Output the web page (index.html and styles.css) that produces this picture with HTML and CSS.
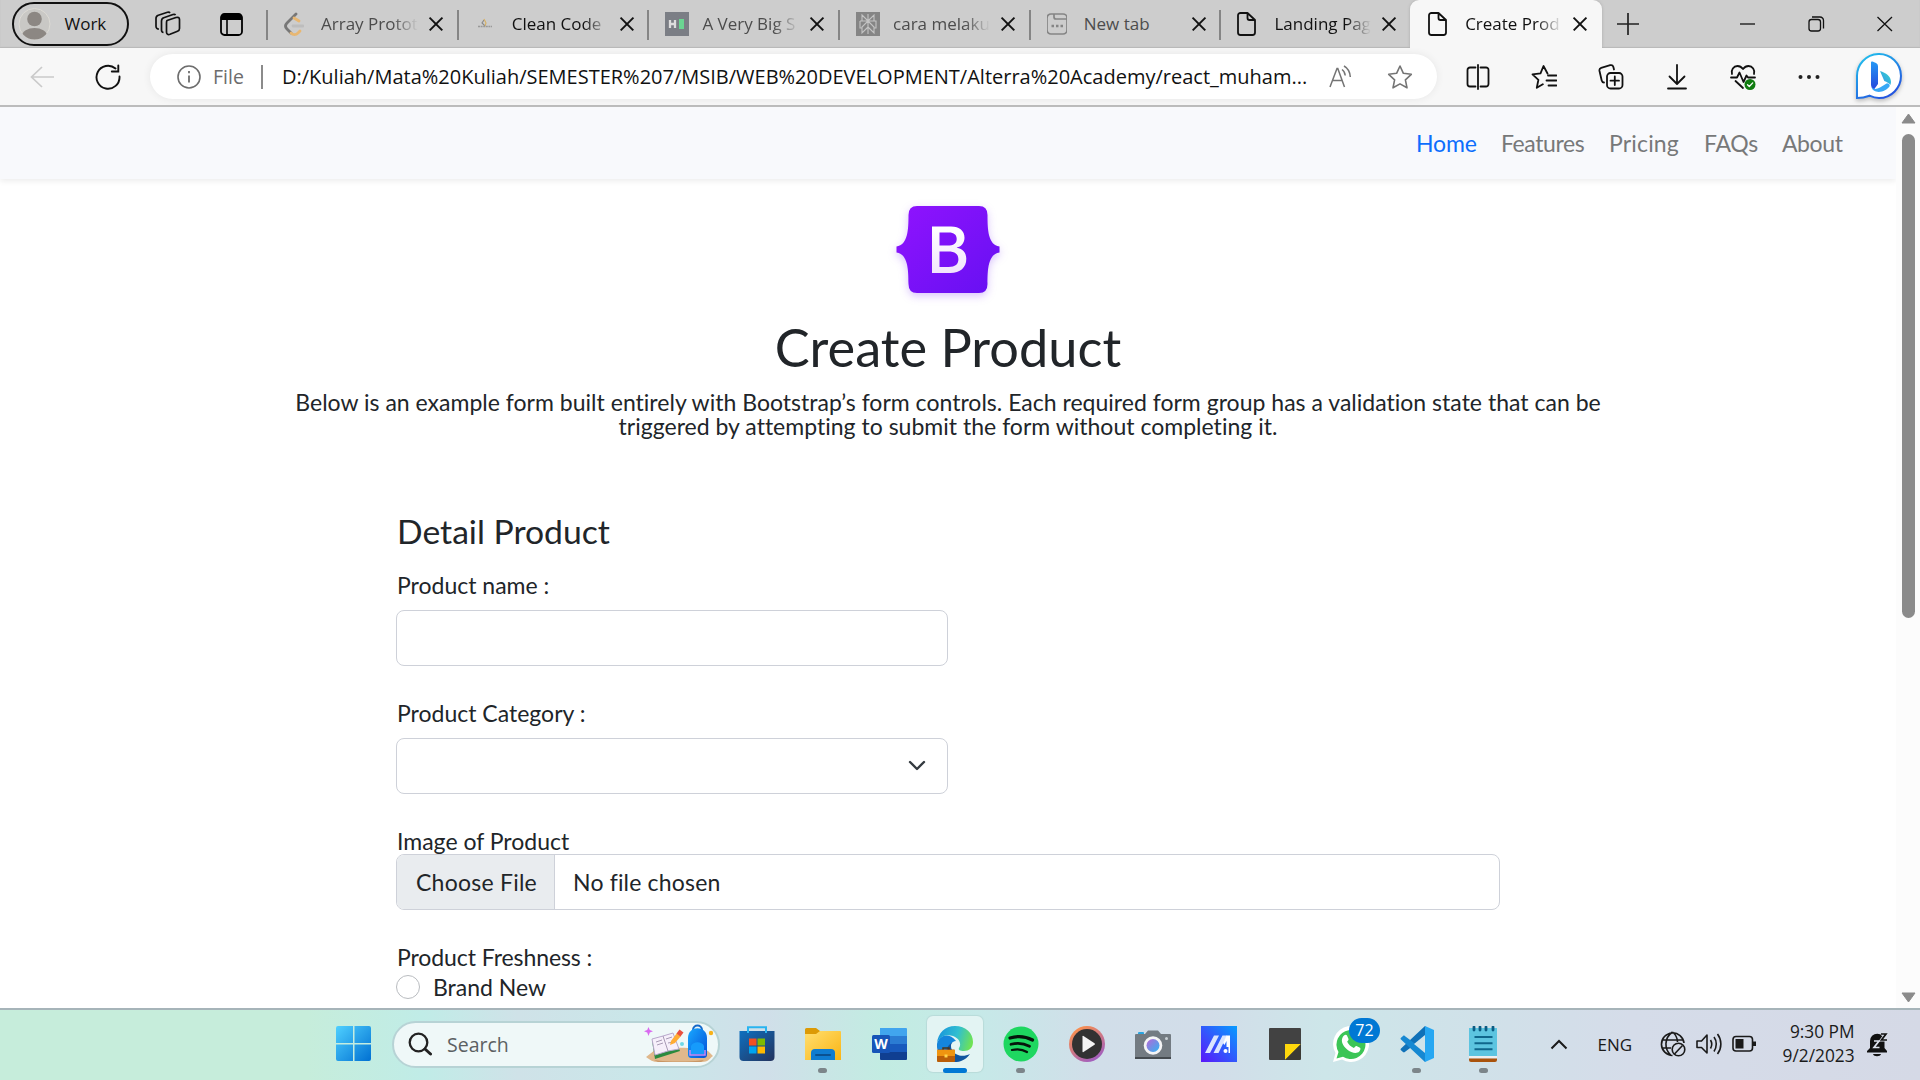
FILE: index.html
```html
<!DOCTYPE html>
<html lang="en">
<head>
<meta charset="utf-8">
<title>Create Product</title>
<link rel="stylesheet" href="styles.css">
</head>
<body>
<div class="screen">
  <header class="tabstrip">
    <div class="profile">
      <svg width="33" height="34" viewBox="0 0 33 34"><defs><clipPath id="av"><circle cx="16.500" cy="17" r="15.500"/></clipPath></defs><circle cx="16.500" cy="17" r="15.500" fill="#c9c8c5" stroke="#dddbd5"/><g fill="#8c8783" clip-path="url(#av)"><circle cx="16.500" cy="12" r="7.300"/><ellipse cx="16.500" cy="28.500" rx="12.500" ry="7.500"/></g></svg>
      <span>Work</span>
    </div>
    <svg class="workspaces" width="26" height="26" viewBox="0 0 26 26" fill="none" stroke="#111" stroke-width="1.700" stroke-linejoin="round"><path d="M12 9.500l9-3c2-.6 3.500.2 3.500 2v9c0 1.500-.8 2.300-2 2.800l-7.500 3c-2 .7-3.500-.2-3.500-2V12c0-1.300.2-2 .5-2.500z"/><path d="M8.500 21.500c-1.300-.2-2-1-2-2.500v-9c0-1.700.7-2.800 2.200-3.300l9.300-3.200c1-.3 2-.2 2.600.5"/><path d="M4 18c-1.800 0-3-1-3-2.700V7.500C1 5.800 1.800 4.800 3.300 4.300L12.500 1.300c1-.3 2-.1 2.600.6"/></svg>
    <svg class="tabactions" width="23" height="23" viewBox="0 0 23 23"><rect x="1" y="1" width="21" height="21" rx="3.500" fill="none" stroke="#000" stroke-width="1.800"/><path d="M1 7V4a3 3 0 0 1 3-3h15a3 3 0 0 1 3 3v3z"/><path d="M7 7v14" stroke="#000" stroke-width="1.600"/></svg>
    <div class="tabs">
      <div class="tab dim">
        <svg class="fav" viewBox="0 0 20 24"><g fill="none" stroke-width="2.800" stroke-linecap="round"><path d="M12 2L3 11c-2 2-2 4 0 6l4 4" stroke="#777"/><path d="M10 6l5 3M7 21c2 2 5 2 7 0l2-2" stroke="#e8b772"/><path d="M9 14h10" stroke="#bdbdbd"/></g></svg>
        <span class="name">Array Protot</span><i class="x"></i></div>
      <div class="tab">
        <svg class="fav" viewBox="0 0 20 24"><path d="M9 8l-2 3 3 3" fill="none" stroke="#888" stroke-width="1.100"/><path d="M9 7l2 4-1 3" stroke="#d8b060" stroke-width="1.100" fill="none"/><path d="M3 14.500h14" stroke="#999" stroke-width="1.300" stroke-dasharray="2 .6"/></svg>
        <span class="name">Clean Code</span><i class="x"></i></div>
      <div class="tab dim">
        <svg class="fav wide" viewBox="0 0 24 24"><path fill="#7b7e85" d="M0 0h24v24H0z"/><path d="M5 8v8M10 8v8M5 12h5" stroke="#ddd" stroke-width="2.300"/><path fill="#6bd592" d="M14 7h5v10h-5z"/></svg>
        <span class="name">A Very Big S</span><i class="x"></i></div>
      <div class="tab dim">
        <svg class="fav wide" viewBox="0 0 24 24"><path fill="#858585" d="M0 0h24v24H0z"/><path d="M12 2v20M6 3l6 6 6-6v6H6zM4 9h16v7h-2M4 9v7h2M12 9l-6 6v6l6-6M12 9l6 6v6l-6-6" fill="none" stroke="#c4c4c4" stroke-width="1.100"/></svg>
        <span class="name">cara melaku</span><i class="x"></i></div>
      <div class="tab dim">
        <svg class="fav" viewBox="0 0 20 24"><g fill="none" stroke="#858585" stroke-width="1.700"><rect x="0" y="2" width="20" height="20" rx="4"/><path d="M7 2v3c0 1.500 1 2 2 2h11"/></g><path d="M4.500 14h2.500M9 14h2.500M13.500 14h2.500" stroke="#858585" stroke-width="2.500"/></svg>
        <span class="name whole">New tab</span><i class="x"></i></div>
      <div class="tab">
        <svg class="fav" viewBox="0 0 20 24"><path d="M3.500 1H10.500L18 8V20.500a2.500 2.500 0 0 1-2.500 2.500H3.500A2.500 2.500 0 0 1 1 20.500V3.500A2.500 2.500 0 0 1 3.500 1zM10.500 1v5a2 2 0 0 0 2 2H18" fill="none" stroke="#111" stroke-width="1.800" stroke-linejoin="round"/></svg>
        <span class="name">Landing Pag</span><i class="x"></i></div>
      <div class="tab active">
        <svg class="fav" viewBox="0 0 20 24"><path d="M3.500 1H10.500L18 8V20.500a2.500 2.500 0 0 1-2.500 2.500H3.500A2.500 2.500 0 0 1 1 20.500V3.500A2.500 2.500 0 0 1 3.500 1zM10.500 1v5a2 2 0 0 0 2 2H18" fill="none" stroke="#111" stroke-width="1.800" stroke-linejoin="round"/></svg>
        <span class="name">Create Prod</span><i class="x"></i></div>
    </div>
    <svg class="newtab" width="22" height="22" viewBox="0 0 22 22"><path d="M11 0v22M0 11h22" stroke="#222" stroke-width="1.700"/></svg>
    <svg class="winbtns" width="154" height="16" viewBox="0 0 154 16" fill="none" stroke="#111" stroke-width="1.300"><path d="M1 8h15"/><rect x="70" y="3.500" width="11.500" height="11.500" rx="2.500"/><path d="M73 1h8a3.500 3.500 0 0 1 3.500 3.500v8"/><path d="M138.500 1L153 15M153 1L138.500 15"/></svg>
  </header>

  <div class="toolbar">
    <svg class="back" width="24" height="22" viewBox="0 0 24 22" fill="none" stroke="#cacaca" stroke-width="1.700"><path d="M12 1L1.500 11 12 21M1.500 11H24"/></svg>
    <svg class="reload" width="26" height="26" viewBox="0 0 26 26" fill="none" stroke="#111" stroke-width="1.900" stroke-linecap="round"><path d="M24.500 12.500A11.500 11.500 0 1 1 20.500 4.500M23.300 1.500v6h-6.500"/></svg>
    <div class="address">
      <svg width="24" height="24" viewBox="0 0 24 24" fill="none" stroke="#6d6d6d" stroke-width="1.600"><circle cx="12" cy="12" r="11"/><path d="M12 10.500v7M12 6v2.200" stroke-width="1.800"/></svg>
      <span class="scheme">File</span><span class="bar"></span>
      <span class="url">D:/Kuliah/Mata%20Kuliah/SEMESTER%207/MSIB/WEB%20DEVELOPMENT/Alterra%20Academy/react_muham...</span>
      <svg class="read" width="24" height="24" viewBox="0 0 24 24" fill="none" stroke="#747474" stroke-width="1.500"><path d="M1 22L8 3.500h.8L15.500 22M3.500 15.500H13.500M13 4.500c2 1.400 3 3.300 3.200 6M15 1c3.800 2.200 6 5.500 6.300 11"/></svg>
      <svg class="star" width="26" height="26" viewBox="0 0 26 26" fill="none" stroke="#747474" stroke-width="1.600" stroke-linejoin="round"><path d="M13 2l3.400 7.300 7.900 1-5.900 5.500 1.600 8L13 19.900 6 23.800l1.600-8L1.700 10.300l7.900-1z"/></svg>
    </div>
    <div class="tools">
      <svg viewBox="0 0 26 26"><path d="M10.500 3.500H5A2.500 2.500 0 0 0 2.500 6v14A2.500 2.500 0 0 0 5 22.500h5.500M15.500 3.500H21A2.500 2.500 0 0 1 23.500 6v14a2.500 2.500 0 0 1-2.500 2.500h-5.500M13 1v24"/></svg>
      <svg viewBox="0 0 26 26"><path d="M16.500 9.500L12.500 2 9.500 9.300l-8 1 5.900 5.500-1.600 8 6-3.500M17 11.500h8.500M15.500 16.500h10M17.500 21.500h8"/></svg>
      <svg viewBox="0 0 26 26"><rect x="9" y="9" width="15.500" height="15.500" rx="3.500"/><path d="M16.800 12.500v8.500M12.500 16.700H21M6 18.500c-1 0-2-.8-2.300-2L1.500 7c-.3-1.500.3-2.700 1.700-3.200l9-2.600c1.500-.4 2.700.3 3.100 1.600L16 5.500"/></svg>
      <svg viewBox="0 0 26 26"><path d="M13 1v18.500M5.500 12.500l7.500 7.500 7.500-7.500M4 24.500h18"/></svg>
      <svg viewBox="0 0 26 26"><path d="M2 10c-1.200-4 1.500-8 5.500-8 2.500 0 4 1 5.500 3 1.500-2 3-3 5.500-3 4 0 6.700 4 5.500 8M1 13.500h6l2.500-5 4 9.500 3-6.500 1.500 2h7M5.500 17l7.500 7"/><circle cx="20" cy="20.500" r="5.500" fill="#107c10" stroke="none"/><path d="M17.500 20.700l1.800 1.800 3.400-3.600" stroke="#fff" stroke-width="1.300"/></svg>
      <svg viewBox="0 0 26 26"><g fill="#222" stroke="none"><circle cx="4.500" cy="13" r="2"/><circle cx="13" cy="13" r="2"/><circle cx="21.500" cy="13" r="2"/></g></svg>
    </div>
    <svg class="bing" width="48" height="48" viewBox="0 0 48 48"><defs><linearGradient id="bg1" x1="0" y1="0" x2=".6" y2="1"><stop offset="0" stop-color="#22c8ee"/><stop offset="1" stop-color="#2356e0"/></linearGradient><linearGradient id="bg2" x1="0" y1="0" x2="0" y2="1"><stop offset="0" stop-color="#2599f5"/><stop offset="1" stop-color="#2447dc"/></linearGradient><linearGradient id="bg3" x1="1" y1="0" x2="0" y2="1"><stop offset="0" stop-color="#38d9c5"/><stop offset="1" stop-color="#2e8df5"/></linearGradient></defs><path d="M2 45V24A22 22 0 1 1 24 45c-3.500 0-6.500-.9-9.500-2.300C11 44 6 45 2 45z" fill="#fff" stroke="url(#bg1)" stroke-width="2"/><path d="M16 9.500q0-1.500 1.500-1l3.500 1.500q2 1 2 3v18l-4 5.500c-2-1-3-3-3-5z" fill="url(#bg2)"/><path d="M25 18c6 2 11 5 11 11 0 1-.3 2-.7 3-1-2-3.500-3-6-4z" fill="url(#bg3)"/><path d="M16.500 33.500c1 3 5 3 8.500 1l7-4.200q3.500 1 2.500 3.200C32 37 26 40 21 38.500c-2.500-.8-4.500-2.500-4.500-5z" fill="#36a8f6"/></svg>
  </div>

  <div class="viewport">
    <div class="page">
      <nav class="navbar"><a class="on n1">Home</a><a class="n2">Features</a><a class="n3">Pricing</a><a class="n4">FAQs</a><a class="n5">About</a></nav>
      <main>
        <svg class="logo" width="124" height="108" viewBox="-10 -10 124 108"><defs><linearGradient id="lg" x1="0" y1="0" x2="1" y2="1"><stop offset="0" stop-color="#9013fe"/><stop offset="1" stop-color="#6610f2"/></linearGradient><linearGradient id="lb" x1="0" y1="0" x2="0" y2="1"><stop offset="0" stop-color="#fff"/><stop offset="1" stop-color="#f1e5fc"/></linearGradient></defs><path d="M21 0H83Q91.500 0 91.500 9C91.500 23 92 39 103.500 40.500V46.500C92 48 91.500 64 91.500 78Q91.500 87 83 87H21Q12.500 87 12.500 78C12.500 64 12 48 .5 46.500V40.500C12 39 12.500 23 12.500 9Q12.500 0 21 0z" fill="url(#lg)"/><path fill-rule="evenodd" d="M36 20.500H55c8.500 0 13.500 4.500 13.500 11.200 0 5-3.200 9-7.700 9.800v.3c5.800.8 9.500 5 9.500 11 0 8.800-6 14.200-16 14.200H36zM43.500 26.500v13h7.700c6.500 0 9.500-2.200 9.500-6.600 0-4-2.700-6.400-7.800-6.400zM43.500 45.500v15.400h9.200c6.500 0 9.700-2.600 9.700-7.700s-3.400-7.700-10.200-7.700z" fill="url(#lb)"/></svg>
        <h1>Create Product</h1>
        <p class="lead">Below is an example form built entirely with Bootstrap’s form controls. Each required form group has a validation state that can be<br>triggered by attempting to submit the form without completing it.</p>
        <form class="form">
          <h2>Detail Product</h2>
          <label>Product name :</label>
          <div class="control half"></div>
          <label class="gap">Product Category :</label>
          <div class="control half select"><svg width="18" height="12" viewBox="0 0 18 12"><path d="M2 2l7 7 7-7" fill="none" stroke="#343a40" stroke-width="2.400" stroke-linecap="round" stroke-linejoin="round"/></svg></div>
          <label class="gap file-label">Image of Product</label>
          <div class="control file"><span class="choose">Choose File</span><span class="none">No file chosen</span></div>
          <label class="gap fresh">Product Freshness :</label>
          <div class="radio"><i></i><span>Brand New</span></div>
        </form>
      </main>
    </div>
    <div class="scroll"><svg width="15" height="11" viewBox="0 0 15 11"><path d="M7.500 1L14 10H1z" fill="#8b8b8b" stroke="#8b8b8b" stroke-linejoin="round"/></svg><div class="thumb"></div><svg class="down" width="15" height="11" viewBox="0 0 15 11"><path d="M7.500 10L14 1H1z" fill="#8b8b8b" stroke="#8b8b8b" stroke-linejoin="round"/></svg></div>
  </div>

  <footer class="taskbar">
    <svg class="start" width="36" height="36" viewBox="0 0 36 36"><defs><linearGradient id="wg" x1="0" y1="0" x2="1" y2="1"><stop offset="0" stop-color="#4fd0ff"/><stop offset="1" stop-color="#0070d2"/></linearGradient></defs><path d="M2 0H17V17H0V2a2 2 0 0 1 2-2zM18.500 0H33a2 2 0 0 1 2 2V17H18.500zM0 18.500H17V35H2a2 2 0 0 1-2-2zM18.500 18.500H35V33a2 2 0 0 1-2 2H18.500z" fill="url(#wg)"/></svg>
    <div class="search">
      <svg width="24" height="24" viewBox="0 0 24 24" fill="none" stroke="#222" stroke-linecap="round"><circle cx="10.500" cy="10.500" r="8.800" stroke-width="2.300"/><path d="M17 17l5.500 5" stroke-width="3"/></svg>
      <span>Search</span>
      <svg class="art" width="72" height="40" viewBox="0 0 72 40"><defs><linearGradient id="bp" x1="0" y1="0" x2="1" y2="1"><stop offset="0" stop-color="#18a8ff"/><stop offset="1" stop-color="#0550d8"/></linearGradient></defs><path d="M2 33l9-7c15-3 40-3 53 1l5 5c-4 3-5 6-11 6H14C9 38 6 36 2 33z" fill="#e0b88c"/><path d="M10 36c15 2 35 2 50 0l-3 2H14z" fill="#c89665"/><path d="M8 17l21-5 7 15-25 8z" fill="#2b8a3e"/><path d="M8 15l11-3 10-3 6 16-11 2-13 4z" fill="#f6effa" stroke="#b9a8cc"/><path d="M19 12l5 15M12 18l6-2M13 21l6-2M22 15l6-2M24 19l5-1" stroke="#a89bb5" fill="none"/><path d="M27 17l6-8 4 3-6 7-5 2z" fill="#ffac33"/><path d="M32.500 9.500l3-4 4 3-3 4z" fill="#e9503f"/><path d="M49 6c0-6 9-6 9 0" fill="none" stroke="#1468c8" stroke-width="2"/><path d="M44 14c0-13 19-13 19 0v16c0 3-1 4-4 4H48c-3 0-4-1-4-4z" fill="url(#bp)"/><path d="M47 22c2-5 11-5 13 0v8H47z" fill="#169bfb"/><path d="M46 26v5h15v-5" fill="none" stroke="#c88af4" stroke-width="1.500"/><path d="M3.500 3l1.300 3L8 7.200 4.800 8.500 3.500 12 2.200 8.500-1 7.200 2.200 6z" fill="#d96af0" transform="translate(1 0)"/><circle cx="38" cy="20" r="2" fill="#6fd8e8"/><circle cx="67" cy="9" r="2.200" fill="#f7b21b"/></svg>
    </div>
    <div class="apps">
      <div class="app"><svg viewBox="0 0 36 36"><defs><linearGradient id="st" x1="0" y1="0" x2="1" y2="1"><stop offset="0" stop-color="#0e70c0"/><stop offset="1" stop-color="#24335e"/></linearGradient></defs><path d="M9 7V1.200h18V7" fill="none" stroke="#29b4f0" stroke-width="2"/><path d="M.5 5h35v26a4 4 0 0 1-4 4h-27a4 4 0 0 1-4-4z" fill="url(#st)"/><path d="M8 5h2v2H8zM26 5h2v2h-2z" fill="#29b4f0"/><path d="M10 12.500h7.500v7H10z" fill="#f25022"/><path d="M18.500 12.500h7.500v7h-7.500z" fill="#7fba00"/><path d="M10 20.500h7.500v7H10z" fill="#00a4ef"/><path d="M18.500 20.500h7.500v7h-7.500z" fill="#ffb900"/></svg></div>
      <div class="app run"><svg viewBox="0 0 36 36"><defs><linearGradient id="fo" x1="0" y1="0" x2="1" y2="1"><stop offset="0" stop-color="#ffdf70"/><stop offset="1" stop-color="#fab413"/></linearGradient></defs><path d="M0 9V3.500A1.500 1.500 0 0 1 1.500 2H11l4 3v4z" fill="#dc9a05"/><path d="M0 8h11l4-3h20a1 1 0 0 1 1 1v28H0z" fill="url(#fo)"/><path d="M6 34v-7a4 4 0 0 1 4-4h16a4 4 0 0 1 4 4v7z" fill="#0f7cd0"/><path d="M11 29h14" stroke="#0a5190" stroke-width="2" stroke-linecap="round"/></svg></div>
      <div class="app"><svg viewBox="0 0 36 36"><path d="M9 2h26a1 1 0 0 1 1 1v7H9z" fill="#41a5ee"/><path d="M9 10h27v8H9z" fill="#2b7cd3"/><path d="M9 18h27v8H9z" fill="#185abd"/><path d="M9 26h27v7a1 1 0 0 1-1 1H10a1 1 0 0 1-1-1z" fill="#103f91"/><rect x="1" y="9" width="18" height="18" rx="1.500" fill="#1755b8"/><text x="10" y="23" text-anchor="middle" class="w">W</text></svg></div>
      <div class="app current"><svg viewBox="0 0 36 36"><defs><linearGradient id="e1" x1="0" y1=".3" x2="1" y2=".5"><stop offset="0" stop-color="#1794dc"/><stop offset=".55" stop-color="#31bfd0"/><stop offset="1" stop-color="#6fe353"/></linearGradient></defs><path d="M0 18A18 18 0 0 0 33 28c-7 3.500-15 2-18-5-1-4 0-7 2-9z" fill="#10559f"/><path d="M0 18c0 8 3 14 12 17-6-8-2-18 7-20C12 6 2 9 0 18z" fill="#1585dc"/><path d="M0 17C1 7 8 0 18 0c11 0 18 7 18 16 0 6-4 9-9 9-4 0-6-1-5-3 3-4 0-10-6-12C9 7.500 2 11 0 17z" fill="url(#e1)"/><path d="M14 20c0-5 7-6 8-2 1 3-2 4-1 6s8 3 12 1c-5 6-19 5-19-5z" fill="#e6f5f4"/><path d="M6 24v-2h6v2" fill="none" stroke="#4c3517" stroke-width="1.500"/><rect y="23.500" width="18" height="12.500" rx="1" fill="#bb5e08"/><path d="M0 24h18v6H0z" fill="#ef9410"/><path d="M7.500 28.500h3v3h-3z" fill="#ffd34b"/></svg></div>
      <div class="app run"><svg viewBox="0 0 36 36"><circle cx="18" cy="18" r="17.500" fill="#1ed760"/><g fill="none" stroke="#06140b" stroke-linecap="round"><path d="M7 12c8-2.500 16-1.500 22.500 2" stroke-width="3.200"/><path d="M8 18.300c7-2 13-1 18.500 2" stroke-width="2.700"/><path d="M9 24c6-1.500 10.500-.8 15 2" stroke-width="2.200"/></g></svg></div>
      <div class="app"><svg viewBox="0 0 36 36"><defs><linearGradient id="mp" x1=".2" y1="0" x2=".8" y2="1"><stop offset="0" stop-color="#ff9247"/><stop offset="1" stop-color="#9a5ac8"/></linearGradient></defs><circle cx="18" cy="18" r="18" fill="url(#mp)"/><circle cx="18" cy="18" r="15" fill="#323232"/><path d="M13.500 10.500a.7.700 0 0 1 1-.6l11 7.300a1 1 0 0 1 0 1.600l-11 7.300a.7.700 0 0 1-1-.6z" fill="#f4f4f4"/></svg></div>
      <div class="app"><svg viewBox="0 0 36 36"><defs><linearGradient id="cm" x1="0" y1="0" x2="1" y2="1"><stop offset="0" stop-color="#b867d8"/><stop offset="1" stop-color="#2fb5f2"/></linearGradient></defs><path d="M3 8V7a1 1 0 0 1 1-1h4a1 1 0 0 1 1 1v1z" fill="#2aa5e0"/><path d="M1 8h9l3-3.500h10L26 8h9a1 1 0 0 1 1 1v23H0V9a1 1 0 0 1 1-1z" fill="#737b82"/><path d="M0 31h36v2H0z" fill="#454b50"/><circle cx="18" cy="19.500" r="9.300" fill="#f4f4f5"/><circle cx="18" cy="19.500" r="6.500" fill="url(#cm)"/><circle cx="31.500" cy="12.500" r="1.500" fill="#c9d0d5"/></svg></div>
      <div class="app"><svg viewBox="0 0 36 36"><defs><linearGradient id="as" x1="1" y1="0" x2="0" y2="1"><stop offset="0" stop-color="#079cff"/><stop offset="1" stop-color="#5b16fa"/></linearGradient></defs><path d="M0 0h36v36H0z" fill="url(#as)"/><path d="M4 27L13 9.500h5L9 27zM12.500 27L21.500 9.500H26L17.500 27z" fill="#d9e4ff"/><path d="M22 17l3.500-7.500H29V21h-3.500v-6l-2 4z" fill="#fff"/><circle cx="24.500" cy="25" r="2" fill="#fff"/><path d="M27.500 20H29v7h-1.500z" fill="#fff"/></svg></div>
      <div class="app"><svg viewBox="0 0 36 36"><path d="M3 2h30a1 1 0 0 1 1 1v22l-9 9H3a1 1 0 0 1-1-1V3a1 1 0 0 1 1-1z" fill="#424242"/><path d="M18 18h16L18 34z" fill="#ffd80c"/><path d="M18 34l16-16v15a1 1 0 0 1-1 1z" fill="#3b3a35"/></svg></div>
      <div class="app"><svg viewBox="0 0 36 36"><path d="M0 36l2.500-9A18 18 0 1 1 9 33.500z" fill="#fff"/><path d="M3.500 32.500l2-6.500A14.500 14.500 0 1 1 10 30.700z" fill="#3cc556"/><path d="M11 9.500c1-1 2.500-1 3 0l1.500 3.500c.3 1-.8 2-1.300 2.700 1.500 3 3.500 4.800 6.600 6.300 1-.7 1.700-2.300 2.700-2l3.500 1.800c1 .7.300 2.700-.7 3.700-2 2-5 1.700-8 .5-4.500-2-8.300-6-9.300-10-.5-2.500.3-5 2-6.500z" fill="#fff"/></svg><b class="badge">72</b></div>
      <div class="app run"><svg viewBox="0 0 36 36"><path d="M26 0L2 22.500c-.6.500-.6 1.200 0 1.700l2 1.800c.6.500 1.200.5 1.800.1L31 7z" fill="#1071b8"/><path d="M26 36L2 13.500c-.6-.5-.6-1.200 0-1.700L4 10c.6-.5 1.200-.5 1.800-.1L31 29z" fill="#1688d2"/><path d="M26 0l9 4v28l-9 4z" fill="#27a7f2"/><path d="M26 9v18L15 18z" fill="#cfe3ea"/></svg></div>
      <div class="app run"><svg viewBox="0 0 36 36"><path d="M4 2h28v29H4z" fill="#5cc4e0"/><path d="M4 30h28v2.500H4z" fill="#eee"/><path d="M4 32.500h28V34a2 2 0 0 1-2 2H6a2 2 0 0 1-2-2z" fill="#a9530d"/><path d="M9 1v3M15 1v3M21 1v3M28 1v3" stroke="#0b5c84" stroke-width="2.800" stroke-linecap="round"/><path d="M9.500 11h18M9.500 17.300h18M9.500 23.300h18" stroke="#0f668c" stroke-width="2"/></svg></div>
    </div>
    <div class="tray">
      <svg class="chev" width="18" height="11" viewBox="0 0 18 11"><path d="M1.500 9.500L9 2l7.500 7.500" fill="none" stroke="#1a1a1a" stroke-width="2"/></svg>
      <span class="lang">ENG</span>
      <svg class="net" width="97" height="26" viewBox="0 0 97 26" fill="none" stroke="#1a1a1a" stroke-width="1.600"><path d="M24 12A11.300 11.300 0 1 0 12.500 24.500M12.500 1C4 7 4 18 11 24.500M12.500 1c3.500 3 5 6.500 5 10M1.500 9h22M1.500 17H11"/><circle cx="18.500" cy="18.500" r="6.300"/><path d="M14.500 23l8-8.500"/><path d="M37 10h4.500L47 4v18l-5.500-5.500H37z" stroke-linejoin="round"/><path d="M50.500 9c1.500 2.500 1.500 6 0 8.500M54 6c3 4 3 10 0 14.500M57.500 3c4.500 6 4.500 14 0 20"/><rect x="73" y="5.500" width="19.500" height="14.500" rx="3"/><path d="M75.500 8h8v9.500h-8z" fill="#1a1a1a" stroke="none"/><path d="M94.500 10.500v4.500" stroke-width="3"/></svg>
      <div class="clock"><span class="time">9:30 PM</span><span>9/2/2023</span></div>
      <svg class="bell" width="22" height="25" viewBox="0 0 22 25"><path d="M3 9a7 7 0 0 1 14.500 0v7l2.500 3v1.500H0V19l3-3z" fill="#111"/><path d="M6 22h8c-.7 3-7.300 3-8 0z" fill="#111"/><path d="M7 9h5l-5 6.500h5.500" fill="none" stroke="#dce1ec" stroke-width="1.700"/><path d="M14 2h5L14.500 8H20" fill="none" stroke="#dce1ec" stroke-width="3.200"/><path d="M14 2h5L14.500 8H20" fill="none" stroke="#111" stroke-width="1.700"/></svg>
    </div>
  </footer>
</div>
</body>
</html>
```
FILE: styles.css
```css
* { box-sizing: border-box; }
body { margin: 0; font-family: "Open Sans", sans-serif; color: #212529; }
svg { display: block; flex: none; }
.screen { width: 1920px; height: 1080px; display: flex; flex-direction: column; overflow: hidden; background: #fff; }

/* tab strip */
.tabstrip { height: 48px; flex: none; display: flex; align-items: center; background: #cdcdcd; box-shadow: inset 0 -1px 1px #b9b9b9; }
.profile { width: 117px; height: 44px; margin-left: 12px; border: 2px solid #111; border-radius: 22px; display: flex; align-items: center; padding-left: 4px; gap: 13.5px; font-size: 17px; color: #111; }
.profile span { position: relative; top: -1px; }
.workspaces { margin-left: 26px; }
.tabactions { margin-left: 39px; }
.tabs { display: flex; margin-left: 23px; height: 48px; }
.tab { width: 190.7px; display: flex; align-items: center; position: relative; padding-left: 18px; color: #111; }
.tab::before { content: ""; position: absolute; left: 0; top: 10px; width: 2px; height: 30px; background: #858585; }
.fav { width: 20px; height: 24px; }
.fav.wide { width: 24px; }
.name { width: 97px; margin-left: 17px; font-size: 17px; line-height: 24px; white-space: nowrap; -webkit-mask-image: linear-gradient(90deg, #000 74%, transparent); mask-image: linear-gradient(90deg, #000 74%, transparent); }
.name.whole { -webkit-mask-image: none; mask-image: none; }
.wide + .name { margin-left: 13px; }
.dim .name { color: #4c4c4c; }
.x { position: relative; width: 14px; height: 14px; margin-left: 11px; }
.x::before, .x::after { content: ""; position: absolute; left: -2px; top: 6px; width: 18px; height: 1.8px; background: #111; transform: rotate(45deg); }
.x::after { transform: rotate(-45deg); }
.tab.active { width: 192px; background: #f7f7f7; border-radius: 9px 9px 0 0; box-shadow: 0 0 3px #aaa; clip-path: inset(0 -4px 0 -4px); }
.active::before { display: none; }
.newtab { margin-left: 15px; }
.winbtns { margin-left: auto; margin-right: 27px; }

/* toolbar */
.toolbar { height: 59px; flex: none; display: flex; align-items: center; background: #f7f7f7; border-bottom: 2px solid #bcbcbc; }
.back { margin-left: 30px; }
.reload { margin-left: 41px; }
.address { width: 1287px; height: 45px; margin-left: 29px; border-radius: 23px; background: #fff; box-shadow: 0 0 8px rgba(0,0,0,.07); display: flex; align-items: center; padding-left: 27px; font-size: 20px; color: #111; }
.scheme { margin-left: 12px; width: 37px; color: #6d6d6d; font-size: 19.5px; }
.bar { width: 2px; height: 24px; margin-left: 11px; background: #8b8b8b; }
.url { margin-left: 19px; width: 1026px; white-space: nowrap; }
.read { margin-left: 21px; }
.star { margin-left: 34px; }
.tools { display: flex; gap: 40.3px; margin-left: 28px; }
.tools svg { width: 26px; height: 26px; fill: none; stroke: #111; stroke-width: 1.8; stroke-linecap: round; stroke-linejoin: round; }
.bing { margin-left: 33px; filter: drop-shadow(0 2px 2px rgba(0,0,0,.25)); }

/* web page */
.viewport { flex: 1; min-height: 0; display: flex; }
.page { width: 1896px; overflow: hidden; font-family: Lato, sans-serif; font-size: 23px; line-height: 24px; }
.navbar { height: 72px; display: flex; justify-content: flex-end; padding: 24px 53px 0 0; background: #f8f9fc; box-shadow: 0 2px 6px rgba(0,0,0,.08); color: #777879; }
.navbar a { white-space: nowrap; margin-left: 24px; }
.navbar .on { color: #0d6efd; }
.n1 { width: 61px; letter-spacing: -.1px; }
.n2 { width: 84px; letter-spacing: -.4px; }
.n3 { width: 71px; letter-spacing: .17px; }
.n4 { width: 54px; letter-spacing: -.25px; }
.n5 { width: 61px; letter-spacing: -.4px; }
main { display: flex; flex-direction: column; align-items: center; padding-top: 17px; }
.logo { filter: drop-shadow(0 3px 4px rgba(102,16,242,.25)); }
h1 { margin: 13px 0 0; font-size: 52.3px; line-height: 60px; font-weight: 400; }
.lead { margin: 13px 0 0; text-align: center; white-space: nowrap; letter-spacing: .015px; font-variant-ligatures: none; }
.form { width: 1104px; margin-top: 73px; }
h2 { margin: 0 0 22px; font-size: 33.7px; line-height: 40px; font-weight: 400; }
label { display: block; margin-bottom: 13px; }
label.gap { margin-top: 35px; }
.file-label.gap { margin-bottom: 1px; }
.fresh.gap { margin-bottom: 6px; letter-spacing: -.08px; }
.control { height: 56px; border: 1px solid #ced1d9; border-radius: 8px; background: #fff; display: flex; align-items: center; overflow: hidden; }
.half { width: 552px; }
.select { justify-content: flex-end; padding-right: 21px; }
.choose { align-self: stretch; width: 158px; padding: 15px 0 0 19px; background: #e9ecef; border-right: 1px solid #ced1d9; letter-spacing: .24px; }
.none { margin-left: 18px; letter-spacing: .18px; }
.radio { display: flex; align-items: center; gap: 13px; }
.radio i { width: 24px; height: 24px; border: 1px solid #b9bcc0; border-radius: 50%; }
h2, label { padding-left: 1px; }
.scroll { width: 24px; background: #fcfcfc; display: flex; flex-direction: column; align-items: center; padding: 6px 0 5px 1px; }
.thumb { width: 13px; height: 484px; margin-top: 10px; border-radius: 7px; background: #8b8b8b; }
.down { margin-top: auto; }

/* taskbar */
.taskbar { height: 72px; flex: none; display: flex; align-items: center; padding-bottom: 2px; border-top: 2px solid #a6b4b9; background: linear-gradient(90deg, #c6eddb 0, #c6eddb 16%, #c0ece7 22%, #cfe2e8 27%, #c9e7e9 34%, #d0dfe9 40%, #c2ece2 46%, #c6e9e8 51%, #d1dee9 57%, #d2dde9 63%, #cde6e9 69%, #d0e1e9 77%, #d5dce9 85%, #d5d9e6 100%); }
.start { margin-left: 336px; }
.search { width: 328px; height: 47px; margin-left: 20px; border-radius: 24px; border: 2px solid #b7d3d5; background: #eff8f8; display: flex; align-items: center; padding-left: 14px; font-size: 19.5px; color: #5b6062; }
.search span { margin-left: 15px; width: 66px; }
.art { margin-left: 131px; }
.apps { display: flex; margin-left: 3.5px; }
.app { position: relative; width: 66.05px; height: 56px; display: flex; align-items: center; justify-content: center; }
.app svg { width: 36px; height: 36px; position: relative; }
.run::after, .current::after { content: ""; position: absolute; bottom: -1px; left: 28.5px; width: 9px; height: 5px; border-radius: 3px; background: #7c858a; }
.current::before { content: ""; position: absolute; inset: 0 5px; border-radius: 6px; background: #e3f4f3; box-shadow: 0 0 1px 1px #b9dbd9; }
.current::after { left: 21px; width: 24px; background: #0078d4; }
.w { font: 700 14px "Open Sans", sans-serif; fill: #fff; }
.badge { position: absolute; left: 31px; top: 2px; width: 31px; height: 25px; border-radius: 13px; background: #0078d4; color: #fff; font-size: 16px; font-weight: 400; line-height: 24px; text-align: center; }
.tray { flex: 1; display: flex; align-items: center; color: #1a1a1a; font-size: 17px; }
.chev { margin-left: 33.5px; }
.lang { margin-left: 30px; width: 36px; }
.net { margin-left: 26px; }
.clock { width: 80px; margin-left: 18px; display: flex; flex-direction: column; align-items: flex-end; line-height: 24px; font-size: 17.3px; }
.bell { margin-left: 12px; }
```
